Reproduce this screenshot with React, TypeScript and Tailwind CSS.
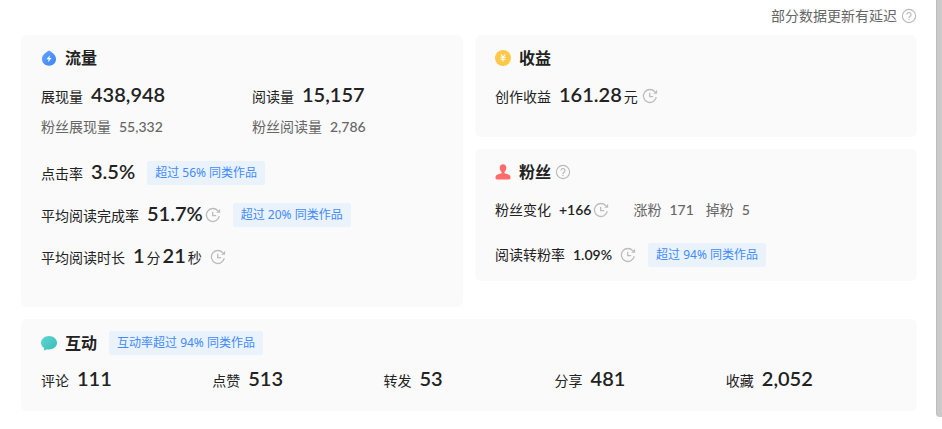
import React from 'react';

const TrafficIcon = () => (
  <svg className="h-4 w-4 shrink-0" viewBox="0 0 16 16" aria-hidden="true">
    <defs>
      <linearGradient id="traffic" x1="0" y1="0" x2="1" y2="1">
        <stop offset="0" stopColor="#65a5fd" />
        <stop offset="1" stopColor="#3a83fb" />
      </linearGradient>
    </defs>
    <path d="M8 .6C9.600 1.700 15 4.200 15 9.100c0 4-3.100 6.700-7 6.700s-7-2.700-7-6.700C1 4.200 6.400 1.700 8 .6z" fill="url(#traffic)" />
    <path d="M8.900 5.200 5.400 9.300h2.200l-.5 2.900 3.500-4.300H8.400z" fill="#fff" />
  </svg>
);

const IncomeIcon = () => (
  <svg className="h-4 w-4 shrink-0" viewBox="0 0 16 16" aria-hidden="true">
    <circle cx="8" cy="8" r="8" fill="#fec848" />
    <path d="M5.800 4.500 8 7l2.200-2.500M5.400 7.200h5.200M5.400 9.300h5.200M8 7v4.500" fill="none" stroke="#fff" strokeWidth="1.100" />
  </svg>
);

const FansIcon = () => (
  <svg className="h-4 w-4 shrink-0" viewBox="0 0 16 16" aria-hidden="true">
    <path d="M8 .3c2 0 3.300 1.500 3.300 3.500 0 1.700-.8 3.500-1.900 4.300v.7c0 .6.4.8 1.500 1 2.900.4 4.600 1.500 4.600 3.700 0 1.400-.5 1.900-1.700 1.900H2.200c-1.200 0-1.700-.5-1.700-1.900 0-2.200 1.700-3.300 4.600-3.700 1.100-.2 1.500-.4 1.500-1v-.7C5.500 7.300 4.700 5.500 4.700 3.800 4.700 1.800 6 .3 8 .3z" fill="#ff6b6b" />
  </svg>
);

const InteractionIcon = () => (
  <svg className="h-4 w-4 shrink-0" viewBox="0 0 16 16" aria-hidden="true">
    <defs>
      <linearGradient id="interaction" x1="0" y1="0" x2="1" y2="1">
        <stop offset="0" stopColor="#62d6d3" />
        <stop offset="1" stopColor="#36bdb8" />
      </linearGradient>
    </defs>
    <path d="M8 1c4.400 0 8 2.900 8 6.700s-3.600 6.700-8 6.700c-.8 0-1.500-.1-2.200-.2-.8.600-1.900 1.100-3.100 1.100.4-.6.500-1.400.4-2.200C1.200 11.900 0 9.900 0 7.700 0 3.900 3.600 1 8 1z" fill="url(#interaction)" />
  </svg>
);

const HelpIcon = () => (
  <svg className="h-4 w-4 shrink-0" viewBox="0 0 16 16" fill="none" stroke="#b8b8b8" aria-hidden="true">
    <circle cx="8" cy="8" r="6.600" strokeWidth="1.100" />
    <path d="M6 6.500a2 2 0 1 1 3.100 1.700C8.300 8.700 8 9 8 9.900" strokeWidth="1.200" />
    <circle cx="8" cy="11.500" r=".75" fill="#b8b8b8" stroke="none" />
  </svg>
);

const DelayIcon = () => (
  <svg className="h-4 w-4 shrink-0" viewBox="0 0 16 16" fill="none" stroke="#bdbdbd" strokeWidth="1.300" aria-hidden="true">
    <path d="M14.300 9.200A6.500 6.500 0 1 1 12.800 3.700" />
    <path d="M15.100 1.700v4.100h-3.900z" fill="#bdbdbd" stroke="none" />
    <path d="M7.700 4.700v3.900h3.500" />
  </svg>
);

const Badge = ({ children }: { children: React.ReactNode }) => (
  <span className="flex h-6 items-center whitespace-nowrap rounded-xs bg-[#eaf3fc] px-2 text-xs text-[#3f8afc]">{children}</span>
);

const Num = ({ children }: { children: React.ReactNode }) => (
  <span className="font-['Lato',sans-serif] text-xl/6 font-semibold">{children}</span>
);

const SmallNum = ({ children }: { children: React.ReactNode }) => (
  <span className="font-['Lato',sans-serif] text-sm font-medium">{children}</span>
);

const Stat = ({ label, value }: { label: string; value: string }) => (
  <div className="flex h-7 items-baseline gap-2 whitespace-nowrap">
    <span>{label}</span>
    <Num>{value}</Num>
  </div>
);

const SubStat = ({ label, value }: { label: string; value: string }) => (
  <div className="flex items-baseline gap-2 whitespace-nowrap text-[#666]">
    <span>{label}</span>
    <SmallNum>{value}</SmallNum>
  </div>
);

const Title = ({ icon, children }: { icon: React.ReactNode; children: React.ReactNode }) => (
  <div className="flex items-center gap-2">
    {icon}
    <h2 className="text-base font-bold">{children}</h2>
  </div>
);

const interactions = [
  { label: '评论', value: '111' },
  { label: '点赞', value: '513' },
  { label: '转发', value: '53' },
  { label: '分享', value: '481' },
  { label: '收藏', value: '2,052' },
];

export default function App() {
  return (
    <div className="relative min-h-screen bg-white pb-4 pl-[21px] pr-[25px] pt-1.5 font-['Noto_Sans','Noto_Sans_CJK_SC',sans-serif] text-sm text-[#222]">
      <div className="flex h-5 items-center justify-end gap-1 text-[#666]">
        <span>部分数据更新有延迟</span>
        <button type="button" aria-label="数据说明"><HelpIcon /></button>
      </div>

      <main className="mt-[9px] grid grid-cols-2 gap-3">
        {/* Traffic */}
        <section className="rounded-md bg-[#fafafa] px-5 pb-[38px] pt-[11px]">
          <Title icon={<TrafficIcon />}>流量</Title>
          <div className="mt-3 grid grid-cols-2 gap-x-5 gap-y-[7px]">
            <Stat label="展现量" value="438,948" />
            <Stat label="阅读量" value="15,157" />
            <SubStat label="粉丝展现量" value="55,332" />
            <SubStat label="粉丝阅读量" value="2,786" />
          </div>

          <div className="mt-6 flex flex-col gap-[18px]">
            <div className="flex h-6 items-center gap-3">
              <Stat label="点击率" value="3.5%" />
              <Badge>超过 56% 同类作品</Badge>
            </div>
            <div className="flex h-6 items-center gap-3">
              <div className="flex items-center gap-0.5">
                <Stat label="平均阅读完成率" value="51.7%" />
                <DelayIcon />
              </div>
              <Badge>超过 20% 同类作品</Badge>
            </div>
            <div className="flex h-6 items-center gap-2">
              <div className="flex h-7 items-baseline gap-2">
                <span>平均阅读时长</span>
                <div className="flex items-baseline gap-0.5">
                  <Num>1</Num>
                  <span>分</span>
                  <Num>21</Num>
                  <span>秒</span>
                </div>
              </div>
              <DelayIcon />
            </div>
          </div>
        </section>

        <div className="flex flex-col gap-3">
          {/* Income */}
          <section className="rounded-md bg-[#fafafa] px-5 pb-[27px] pt-[11px]">
            <Title icon={<IncomeIcon />}>收益</Title>
            <div className="mt-3 flex items-center gap-1">
              <div className="flex h-7 items-baseline gap-0.5">
                <Stat label="创作收益" value="161.28" />
                <span>元</span>
              </div>
              <DelayIcon />
            </div>
          </section>

          {/* Fans */}
          <section className="rounded-md bg-[#fafafa] px-5 pb-3.5 pt-[11px]">
            <div className="flex items-center gap-1">
              <Title icon={<FansIcon />}>粉丝</Title>
              <button type="button" aria-label="粉丝说明"><HelpIcon /></button>
            </div>
            <div className="mt-3.5 flex h-6 items-center gap-6">
              <div className="flex items-center gap-0.5">
                <div className="flex items-baseline gap-2">
                  <span>粉丝变化</span>
                  <span className="font-['Lato',sans-serif] font-semibold">+166</span>
                </div>
                <DelayIcon />
              </div>
              <div className="flex gap-3">
                <SubStat label="涨粉" value="171" />
                <SubStat label="掉粉" value="5" />
              </div>
            </div>
            <div className="mt-[21px] flex h-6 items-center gap-3">
              <div className="flex items-center gap-2">
                <div className="flex items-baseline gap-2">
                  <span>阅读转粉率</span>
                  <span className="font-['Lato',sans-serif] font-semibold">1.09%</span>
                </div>
                <DelayIcon />
              </div>
              <Badge>超过 94% 同类作品</Badge>
            </div>
          </section>
        </div>

        {/* Interaction */}
        <section className="col-span-2 rounded-md bg-[#fafafa] px-5 pb-[17px] pt-3">
          <div className="flex items-center gap-3">
            <Title icon={<InteractionIcon />}>互动</Title>
            <Badge>互动率超过 94% 同类作品</Badge>
          </div>
          <div className="mt-[11px] grid grid-cols-5">
            {interactions.map((item) => (
              <Stat key={item.label} label={item.label} value={item.value} />
            ))}
          </div>
        </section>
      </main>

      {/* Scrollbar thumb */}
      <div className="absolute right-0 top-0 h-[417px] w-1.5 rounded-bl-sm border-l border-[#bdbdbd] bg-[#cacaca]" />
    </div>
  );
}
